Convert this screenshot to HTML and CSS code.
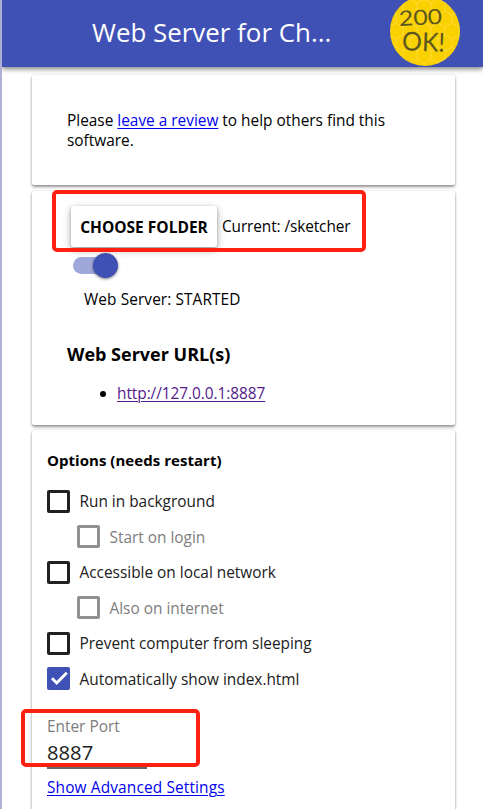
FILE: index.html
```html
<!DOCTYPE html>
<html lang="en">
<head>
<meta charset="utf-8">
<title>Web Server for Chrome</title>
<link rel="stylesheet" href="styles.css">
</head>
<body>
<header class="toolbar">
  <h1>Web Server for Ch...</h1>
  <svg class="logo" width="72" height="72" viewBox="0 0 72 72">
    <defs>
      <pattern id="comb" width="14" height="24" patternUnits="userSpaceOnUse">
        <path d="M7 0v4l7 4v8l-7 4v4M7 4L0 8v8l7 4" fill="none" stroke="#ffe04a" stroke-width=".7"/>
      </pattern>
    </defs>
    <circle cx="36" cy="36" r="35" fill="#f9d000"/>
    <circle cx="36" cy="36" r="35" fill="url(#comb)"/>
    <g class="scrawl">
      <text x="10" y="30" textLength="43" lengthAdjust="spacingAndGlyphs" font-size="21" transform="rotate(-3 30 24)">200</text>
      <text x="13" y="56" textLength="43" lengthAdjust="spacingAndGlyphs" font-size="26" transform="rotate(2 34 50)">OK!</text>
    </g>
  </svg>
</header>
<main>
  <section class="card review">
    <p>Please <a href="#">leave a review</a> to help others find this<br>software.</p>
  </section>
  <section class="card server">
    <div class="folder">
      <button type="button">CHOOSE FOLDER</button>
      <span class="current">Current: /sketcher</span>
      <div class="mark mark-folder"></div>
    </div>
    <div class="toggle"><div class="thumb"></div></div>
    <p class="status">Web Server: STARTED</p>
    <h2>Web Server URL(s)</h2>
    <div class="url"><i></i><a href="#">http://127.0.0.1:8887</a></div>
  </section>
  <section class="card options">
    <h3>Options (needs restart)</h3>
    <div class="option"><span class="box"></span><span class="text">Run in background</span></div>
    <div class="option sub"><span class="box"></span><span class="text">Start on login</span></div>
    <div class="option"><span class="box"></span><span class="text">Accessible on local network</span></div>
    <div class="option sub"><span class="box"></span><span class="text">Also on internet</span></div>
    <div class="option"><span class="box"></span><span class="text">Prevent computer from sleeping</span></div>
    <div class="option"><span class="box checked"><svg width="23" height="23" viewBox="0 0 23 23"><path d="M5 11.3l4.7 4.7L19.8 5.8" fill="none" stroke="#fff" stroke-width="2.9"/></svg></span><span class="text">Automatically show index.html</span></div>
    <div class="port">
      <label>Enter Port</label>
      <div class="value">8887</div>
      <div class="mark mark-port"></div>
    </div>
    <a class="advanced" href="#">Show Advanced Settings</a>
  </section>
</main>
</body>
</html>
```
FILE: styles.css
```css
* { box-sizing: border-box; }
html { height: 809px; overflow: hidden; }
body {
  margin: 0;
  height: 809px;
  overflow: hidden;
  background: #fff;
  border-left: 2px solid #b0b0d4;
  color: #000;
  font: 15.4px/20px "Open Sans", "Noto Sans", sans-serif;
}
h1, h2, h3, p { margin: 0; }
a { color: #0000ee; text-underline-offset: 2px; text-decoration-thickness: 1px; }
.toolbar {
  height: 67px;
  display: flex;
  align-items: center;
  justify-content: space-between;
  padding: 0 22px 3px 90px;
  background: #3f51b5;
  box-shadow: 0 2px 5px rgba(0,0,0,.5);
}
h1 { color: #fff; font-size: 25.9px; font-weight: 400; line-height: 34px; white-space: nowrap; }
.logo { flex: none; margin-top: -2px; }
.scrawl { fill: #5c5620; font-family: Lato, sans-serif; font-weight: 400; }
main { display: flex; flex-direction: column; gap: 6px; padding: 8px 28px 0 30px; }
.card { background: #fff; border-radius: 2px; box-shadow: 0 2px 3px rgba(0,0,0,.4), 0 0 2px rgba(0,0,0,.16); white-space: nowrap; }
.review { height: 110px; padding: 36px 35px; }
.server { height: 234px; padding: 15px 35px; }
.folder { position: relative; display: flex; align-items: center; height: 41px; padding-left: 4px; gap: 5px; }
button {
  width: 146px;
  height: 41px;
  padding: 0;
  border: 0;
  border-radius: 3px;
  background: #fff;
  font: 700 15.5px/20px "Open Sans", sans-serif;
  box-shadow: 0 3px 8px rgba(0,0,0,.3), 0 1px 3px rgba(0,0,0,.25);
}
.current { letter-spacing: -.1px; }
.mark { position: absolute; border: 4px solid #ff2012; border-radius: 5px; }
.mark-folder { left: -15.5px; top: -16.5px; width: 314px; height: 62px; }
.toggle { width: 45px; height: 17px; margin: 10px 0 0 6px; border-radius: 9px; background: #9fa8da; display: flex; align-items: center; justify-content: flex-end; }
.thumb { width: 25px; height: 25px; border-radius: 50%; background: #3f51b5; box-shadow: 0 1px 3px rgba(0,0,0,.5); }
.status { margin: 16px 0 0 17px; letter-spacing: .1px; }
h2 { margin-top: 31px; font-size: 18px; line-height: 26px; }
.url { display: flex; align-items: center; margin: 17px 0 0 33px; gap: 11px; }
.url i { width: 6px; height: 6px; border-radius: 50%; background: #000; }
.url a { color: #551a8b; letter-spacing: -.05px; }
.options { height: 400px; margin-top: -1px; padding: 20px 15px; }
h3 { font-size: 15px; line-height: 20px; letter-spacing: .04px; margin-bottom: 13.5px; }
.option { height: 35.5px; display: flex; align-items: center; gap: 10px; color: #212121; }
.text { padding-top: 2px; margin-left: -.5px; }
.sub { padding-left: 30px; color: #7d7d7d; }
.box { width: 23px; height: 23px; flex: none; border: 3px solid #212121; border-radius: 2px; }
.sub .box { border-color: #909090; }
.checked { border: 0; background: #3f51b5; }
.checked svg { display: block; }
.port { position: relative; width: 100px; height: 52.5px; margin-top: 19.5px; border-bottom: 2px solid #666; color: #212121; }
label { display: block; padding-top: 1px; color: #7d7d7d; }
.value { font-size: 20.2px; line-height: 28px; margin-top: 1px; }
.mark-port { left: -26px; top: -7px; width: 179px; height: 58px; }
.advanced { display: inline-block; margin-top: 9px; letter-spacing: .15px; }
```
